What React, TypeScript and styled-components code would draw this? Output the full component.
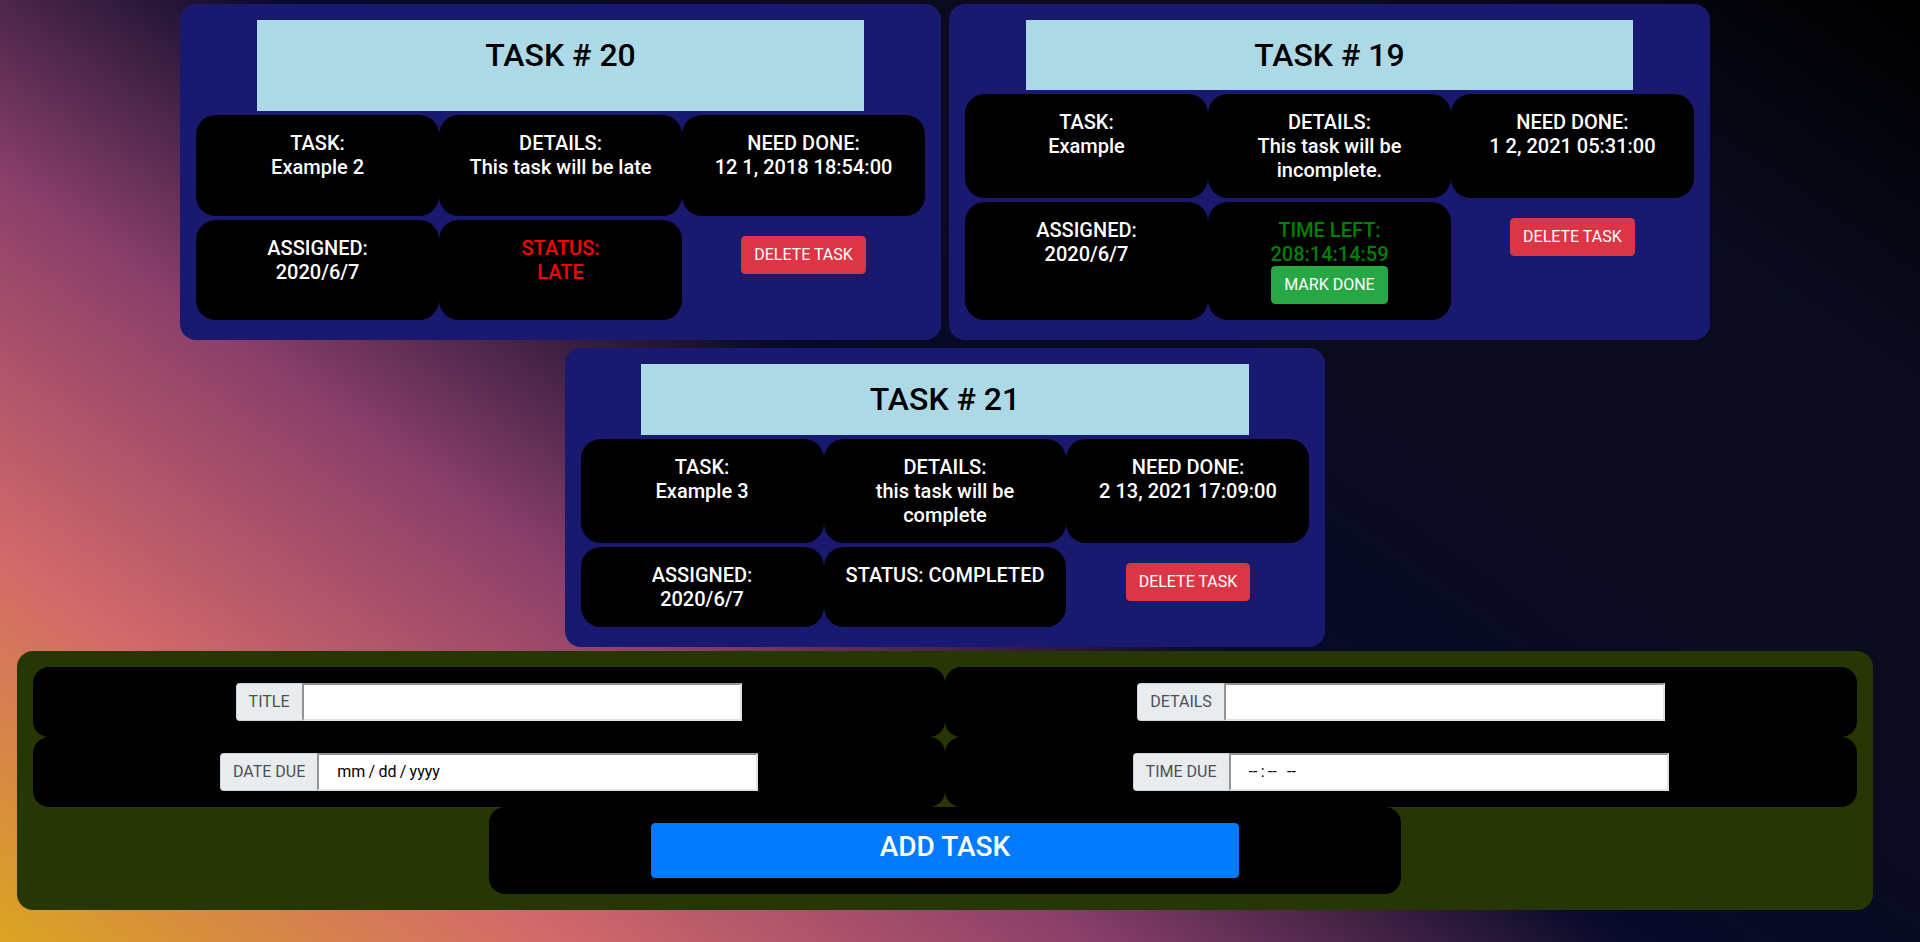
import React, { useState } from "react";
import styled, { createGlobalStyle } from "styled-components";

const GlobalStyle = createGlobalStyle`
  *, *::before, *::after { box-sizing: border-box; }
  body {
    margin: 0;
    font-family: Roboto, "Liberation Sans", sans-serif;
    font-size: 16px;
    line-height: 24px;
    color: #fff;
    background: #0a0a28;
  }
  h2, h3, p { margin: 0; font-weight: 500; line-height: 1.2; }
`;

const Page = styled.main`
  min-height: 100vh;
  padding-right: 30px;
  background: linear-gradient(
    35deg,
    #daa520,
    #d46a6a,
    #8b3f6a,
    #070a28,
    #0a0b1f,
    #090b1e,
    #000
  );
`;

const TaskList = styled.section`
  display: flex;
  flex-wrap: wrap;
  justify-content: center;
`;

const Card = styled.article`
  display: grid;
  grid-template-columns: repeat(3, 1fr);
  width: 40.26%;
  margin: 4px;
  padding: 16px;
  border-radius: 16px;
  background: midnightblue;
  text-align: center;
`;

const CardTitle = styled.h2`
  grid-column: 1 / -1;
  justify-self: center;
  width: 83.33%;
  margin-bottom: 4px;
  padding: 16px;
  background: lightblue;
  color: #000;
  font-size: 32px;
`;

const Tile = styled.div<{ $tone?: string }>`
  margin-bottom: 4px;
  padding: 16px;
  border-radius: 20px;
  background: #000;
  color: ${({ $tone }) => $tone ?? "#fff"};
  font-size: 20px;
  font-weight: 500;
  line-height: 24px;
`;

const ActionCell = styled.div`
  margin-bottom: 4px;
  padding: 16px;
`;

const Button = styled.button<{ $color: string }>`
  padding: 6px 12px;
  border: 1px solid ${({ $color }) => $color};
  border-radius: 4px;
  background: ${({ $color }) => $color};
  color: #fff;
  font: 400 16px/24px Roboto, "Liberation Sans", sans-serif;
  vertical-align: top;
  cursor: pointer;
`;

const AddButton = styled(Button)`
  width: 66.8%;
`;

const AddLabel = styled.h3`
  margin-bottom: 8px;
  font-size: 28px;
`;

const TaskForm = styled.form`
  display: flex;
  flex-wrap: wrap;
  justify-content: center;
  margin: 0 17px;
  padding: 16px;
  border-radius: 16px;
  background: #263605;
`;

const FormCell = styled.div`
  display: flex;
  justify-content: center;
  width: 50%;
  padding: 16px;
  border-radius: 16px;
  background: #000;
`;

const FieldLabel = styled.label`
  padding: 6px 12px;
  border: 1px solid #ced4da;
  border-right: 0;
  border-radius: 4px 0 0 4px;
  background: #e9ecef;
  color: #495057;
`;

const FieldInput = styled.input`
  width: 50.1%;
  height: 38px;
  padding: 0 18px;
  border: 2px solid;
  border-color: #949494 #e3e3e3 #e3e3e3 #949494;
  border-radius: 0;
  background: #fff;
  color: #000;
  font: 400 16px/24px Roboto, "Liberation Sans", sans-serif;
  &::placeholder { color: #000; opacity: 1; }
`;

type Task = {
  id: number;
  title: string;
  details: string;
  due: string;
  assigned: string;
  state: "late" | "open" | "done";
  timeLeft?: string;
};

const initialTasks: Task[] = [
  { id: 20, title: "Example 2", details: "This task will be late", due: "12 1, 2018 18:54:00", assigned: "2020/6/7", state: "late" },
  { id: 19, title: "Example", details: "This task will be incomplete.", due: "1 2, 2021 05:31:00", assigned: "2020/6/7", state: "open", timeLeft: "208:14:14:59" },
  { id: 21, title: "Example 3", details: "this task will be complete", due: "2 13, 2021 17:09:00", assigned: "2020/6/7", state: "done" },
];

// Thin spaces keep the date and time hints compact.
const fields = [
  { id: "title", label: "TITLE", placeholder: "" },
  { id: "details", label: "DETAILS", placeholder: "" },
  { id: "date-due", label: "DATE DUE", placeholder: "mm\u2009/\u2009dd\u2009/\u2009yyyy" },
  { id: "time-due", label: "TIME DUE", placeholder: "--\u2009:\u2009--\u2009\u00a0\u2009--" },
];

function StatusTile({ task, onDone }: { task: Task; onDone: () => void }) {
  if (task.state === "late") {
    return <Tile $tone="red"><p>STATUS:<br />LATE</p></Tile>;
  }
  if (task.state === "open") {
    return (
      <Tile $tone="green">
        <p>TIME LEFT:<br />{task.timeLeft}</p>
        <Button type="button" $color="#28a745" onClick={onDone}>MARK DONE</Button>
      </Tile>
    );
  }
  return <Tile><p>STATUS: COMPLETED</p></Tile>;
}

export default function App() {
  const [tasks, setTasks] = useState(initialTasks);
  const remove = (id: number) => setTasks((all) => all.filter((t) => t.id !== id));
  const finish = (id: number) =>
    setTasks((all) => all.map((t) => (t.id === id ? { ...t, state: "done" as const } : t)));

  return (
    <Page>
      <GlobalStyle />
      <TaskList>
        {tasks.map((task) => (
          <Card key={task.id}>
            <CardTitle>TASK # {task.id}</CardTitle>
            <Tile><p>TASK:<br />{task.title}</p></Tile>
            <Tile><p>DETAILS:<br />{task.details}</p></Tile>
            <Tile><p>NEED DONE:<br />{task.due}</p></Tile>
            <Tile><p>ASSIGNED:<br />{task.assigned}</p></Tile>
            <StatusTile task={task} onDone={() => finish(task.id)} />
            <ActionCell>
              <Button type="button" $color="#dc3545" onClick={() => remove(task.id)}>DELETE TASK</Button>
            </ActionCell>
          </Card>
        ))}
      </TaskList>
      <TaskForm onSubmit={(e) => e.preventDefault()}>
        {fields.map((f) => (
          <FormCell key={f.id}>
            <FieldLabel htmlFor={f.id}>{f.label}</FieldLabel>
            <FieldInput id={f.id} type="text" placeholder={f.placeholder} />
          </FormCell>
        ))}
        <FormCell>
          <AddButton type="submit" $color="#007bff">
            <AddLabel>ADD TASK</AddLabel>
          </AddButton>
        </FormCell>
      </TaskForm>
    </Page>
  );
}
